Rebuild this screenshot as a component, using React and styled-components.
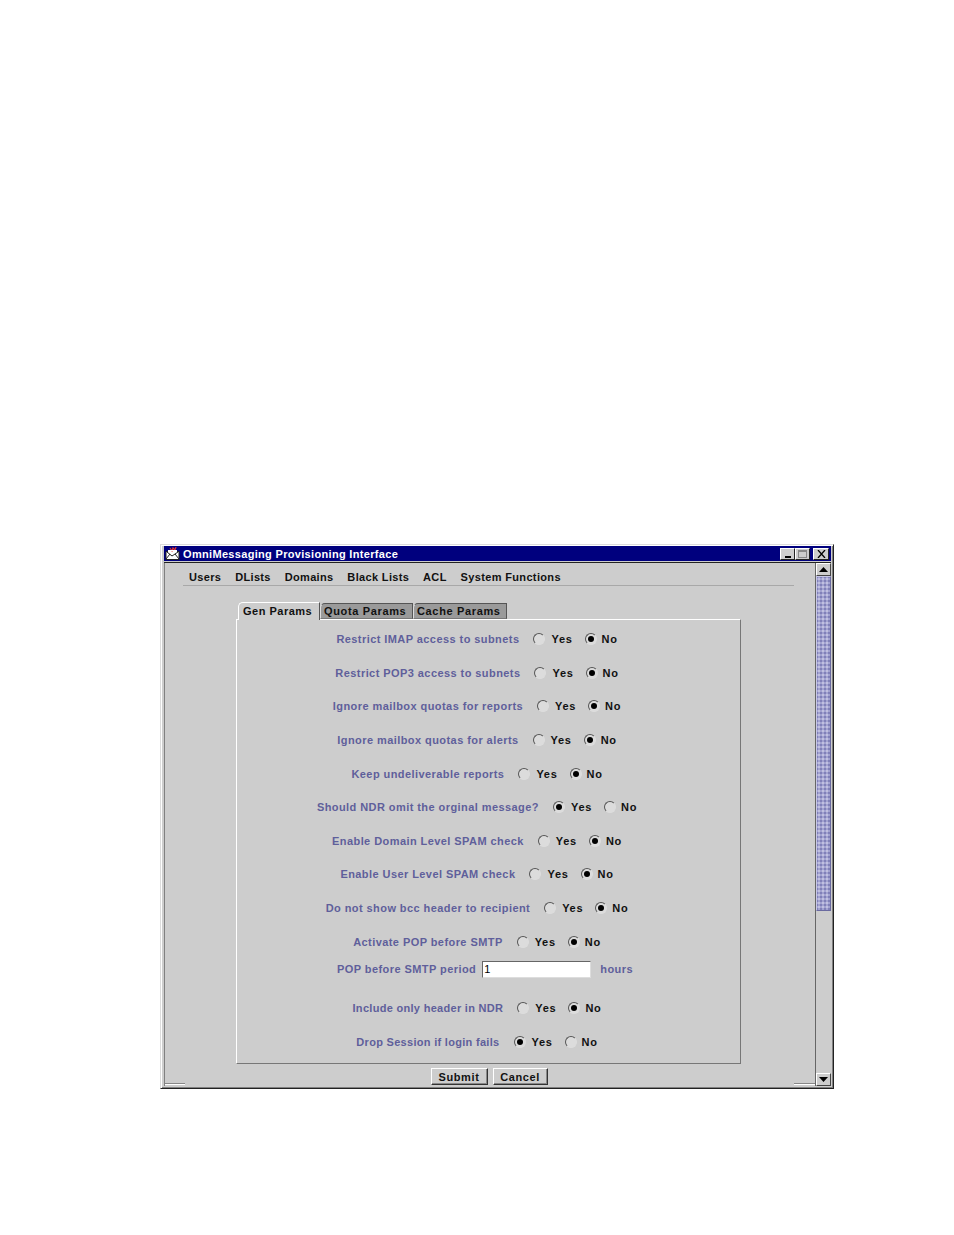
import React from 'react';
import styled, { createGlobalStyle } from 'styled-components';

const Global = createGlobalStyle`
  html, body { margin: 0; background: #fff; }
  body { width: 954px; height: 1235px; overflow: hidden; font-family: "Liberation Sans", Arial, sans-serif; }
`;
const Page = styled.div`
  width: 954px; height: 1235px; padding: 544px 0 0 160px; box-sizing: border-box;
`;
const Win = styled.div`
  width: 674px; height: 545px; box-sizing: border-box; background: #cdcdcd;
  border: 1px solid; border-color: #dcdcdc #222 #222 #dcdcdc;
  box-shadow: inset 1px 1px 0 #fff, inset -1px -1px 0 #808080;
  padding: 1px 2px 2px 3px; display: flex; flex-direction: column;
`;
const TitleBar = styled.div`
  height: 15px; flex: none; background: #00007e; color: #fff; display: flex; align-items: center;
  padding: 0 2px 0 1px; font-size: 11px; font-weight: bold; letter-spacing: .32px; gap: 3px;
`;
const TitleText = styled.span`flex: 1; white-space: nowrap;`;
const WinBtn = styled.div`
  width: ${p => p.$w || 15}px; height: 12px; box-sizing: border-box; background: #cdcdcd; margin-left: ${p => p.$gap || 0}px;
  border: 1px solid; border-color: #fff #222 #222 #fff; display: flex; align-items: center; justify-content: center;
  svg { display: block; }
`;
const Body = styled.div`
  flex: 1; display: flex; min-height: 0; border-top: 1px solid #222; margin-top: 1px;
`;
const Main = styled.div`flex: 1; min-width: 0; display: flex; flex-direction: column; border-left: 1px solid #808080; position: relative;`;
const MenuBar = styled.div`
  margin: 0 21px 0 18px; height: 23px; border-bottom: 1px solid #a8a8a8; display: flex; align-items: center;
  gap: 13.8px; padding: 5px 0 0 6px; box-sizing: border-box;
`;
const MenuItem = styled.span`font-size: 11px; font-weight: bold; letter-spacing: .35px; color: #111; white-space: nowrap;`;
const Tabs = styled.div`display: flex; margin: 15px 0 0 73px; height: 18px; align-items: flex-end; position: relative; z-index: 1;`;
const Tab = styled.div`
  height: ${p => p.$on ? 18 : 16}px; box-sizing: border-box; padding: 0 2px ${p => p.$on ? 2 : 0}px ${p => p.$on ? 4 : 3}px;
  width: ${p => p.$w}px; background: ${p => p.$on ? '#cdcdcd' : '#9a9a9a'}; font-size: 11px; font-weight: bold;
  letter-spacing: ${p => p.$on ? .5 : .65}px; color: #111; display: flex; align-items: center; white-space: nowrap;
  border-top: 1px solid #fff; border-left: 1px solid #fff; border-right: 1px solid #555;
  border-top-left-radius: 5px; margin-bottom: ${p => p.$on ? -1 : 0}px;
  ${p => !p.$on && 'border-bottom: 1px solid #777; border-top-color: #555; border-left-color: #ddd;'}
`;
const Panel = styled.div`
  margin-left: 71px; width: 505px; height: 445px; box-sizing: border-box;
  border: 1px solid; border-color: #fff #777 #777 #fff; padding-top: 2.4px;
`;
const Row = styled.div`
  height: ${p => p.$h || 33.6}px; display: flex; align-items: center; justify-content: center;
  padding-right: ${p => p.$pr ?? 23}px; padding-left: ${p => p.$pl || 0}px;
  margin-top: ${p => p.$mt || 0}px;
`;
const Label = styled.span`font-size: 11px; font-weight: bold; letter-spacing: ${p => p.$ls || .43}px; color: #5f5f9b; white-space: nowrap; margin-right: ${p => p.$mr ?? 14}px;`;
const Radio = styled.span`
  width: 12px; height: 12px; border-radius: 50%; box-sizing: border-box; border: 1px solid #555;
  background: #dcdcdc; border-right-color: #ddd; border-bottom-color: #ddd; display: flex; align-items: center; justify-content: center; margin-right: ${p => p.$mr || 6}px;
`;
const Dot = styled.span`width: 6px; height: 6px; border-radius: 50%; background: #000;`;
const Opt = styled.span`font-size: 11px; font-weight: bold; letter-spacing: .7px; color: #111; margin-right: ${p => p.$mr || 0}px;`;
const Input = styled.input`
  width: 109px; height: 17px; box-sizing: border-box; border: 1px solid; border-color: #666 #ddd #ddd #666; background: #fff;
  font: 11px "Liberation Sans", Arial, sans-serif; padding: 0 1px; margin: 0 9px 0 0; outline: none; color: #000;
`;
const Footer = styled.div`display: flex; justify-content: center; gap: 5px; height: 19px; padding: 4px 0 0 0; box-sizing: border-box; margin-left: -2px;`;
const Btn = styled.button`
  width: ${p => p.$w}px; height: 17px; box-sizing: border-box; background: #cdcdcd; padding: 0;
  border: 1px solid; border-color: #fff #333 #333 #fff;
  box-shadow: inset -1px -1px 0 #888; font: bold 11px "Liberation Sans", Arial, sans-serif; letter-spacing: .6px; color: #111;
`;
const Scroll = styled.div`width: 15px; flex: none; display: flex; flex-direction: column; border-left: 1px solid #666;`;
const ArrowBtn = styled.div`
  height: 13px; flex: none; background: #cdcdcd; border: 1px solid; border-color: #fff #444 #444 #fff; box-sizing: border-box;
  display: flex; align-items: center; justify-content: center;
`;
const Thumb = styled.div`
  height: 335px; flex: none; box-sizing: border-box; border: 1px solid; border-color: #c8c8e6 #6a6aa0 #6a6aa0 #c8c8e6;
  background-color: #a2a2d0;
  background-image: radial-gradient(#c0c0e0 .8px, transparent .9px), radial-gradient(#8080b8 .8px, transparent .9px);
  background-size: 4px 4px; background-position: 0 0, 2px 2px;
`;
const Track = styled.div`flex: 1;`;
const Corner = styled.div`
  position: absolute; height: 1px; bottom: 2px; background: #888; box-shadow: 0 1px 0 #fff; width: 20px;
  ${p => p.$right ? 'right: 0; width: 21px;' : 'left: 0;'}
`;

const rows = [
  ['Restrict IMAP access to subnets', 1],
  ['Restrict POP3 access to subnets', 1],
  ['Ignore mailbox quotas for reports', 1],
  ['Ignore mailbox quotas for alerts', 1],
  ['Keep undeliverable reports', 1],
  ['Should NDR omit the orginal message?', 0],
  ['Enable Domain Level SPAM check', 1],
  ['Enable User Level SPAM check', 1],
  ['Do not show bcc header to recipient', 1],
  ['Activate POP before SMTP', 1],
];
const Choice = ({ label, sel, mt, ls }) => (
  <Row $mt={mt}>
    <Label $ls={ls}>{label}</Label>
    <Radio>{sel === 0 && <Dot />}</Radio><Opt $mr={12}>Yes</Opt>
    <Radio $mr={5}>{sel === 1 && <Dot />}</Radio><Opt>No</Opt>
  </Row>
);
const AppIcon = () => (
  <svg width="15" height="13" viewBox="0 0 15 13">
    <rect x="1" y="4" width="13" height="9" fill="#fff" />
    <path d="M2 5l5 4 6-4M1 12l4-5M14 12l-4-5M1 4.5v8h13v-8h-2M3 4.5H1" fill="none" stroke="#222" strokeWidth="1" />
    <path d="M5 1l2 3 1-3 2 2 1-3" fill="none" stroke="#e03030" strokeWidth="1.2" />
    <path d="M3 3.5h9" stroke="#fff" strokeWidth="1" />
  </svg>
);

export default function App() {
  return (
    <Page>
      <Global />
      <Win>
        <TitleBar>
          <AppIcon />
          <TitleText>OmniMessaging Provisioning Interface</TitleText>
          <WinBtn><svg width="8" height="8"><rect x="1" y="6" width="6" height="2" fill="#000" /></svg></WinBtn>
          <WinBtn $gap={-3}><svg width="9" height="8"><rect x=".5" y=".5" width="8" height="7" fill="none" stroke="#888" /><rect x="1" y="1" width="7" height="1" fill="#888" /></svg></WinBtn>
          <WinBtn $w={16}><svg width="9" height="8"><path d="M1 0l7 8M8 0l-7 8" stroke="#000" strokeWidth="1.3" /></svg></WinBtn>
        </TitleBar>
        <Body>
          <Main>
            <MenuBar>
              {['Users', 'DLists', 'Domains', 'Black Lists', 'ACL', 'System Functions'].map(m => <MenuItem key={m}>{m}</MenuItem>)}
            </MenuBar>
            <Tabs>
              <Tab $on $w={82}>Gen Params</Tab>
              <Tab $w={93}>Quota Params</Tab>
              <Tab $w={94}>Cache Params</Tab>
            </Tabs>
            <Panel>
              {rows.map(([l, s]) => <Choice key={l} label={l} sel={s} />)}
              <Row $h={22} $pr={7}>
                <Label $mr={6}>POP before SMTP period</Label>
                <Input defaultValue="1" />
                <Label $mr={0}>hours</Label>
              </Row>
              <Choice label="Include only header in NDR" sel={1} mt={11} ls={.3} />
              <Choice label="Drop Session if login fails" sel={0} mt={.4} ls={.3} />
            </Panel>
            <Footer>
              <Btn $w={57}>Submit</Btn>
              <Btn $w={55}>Cancel</Btn>
            </Footer>
            <Corner />
            <Corner $right />
          </Main>
          <Scroll>
            <ArrowBtn><svg width="9" height="5"><path d="M4.5 0L9 5H0z" fill="#000" /></svg></ArrowBtn>
            <Thumb />
            <Track />
            <ArrowBtn><svg width="9" height="5"><path d="M0 0h9L4.5 5z" fill="#000" /></svg></ArrowBtn>
          </Scroll>
        </Body>
      </Win>
    </Page>
  );
}
